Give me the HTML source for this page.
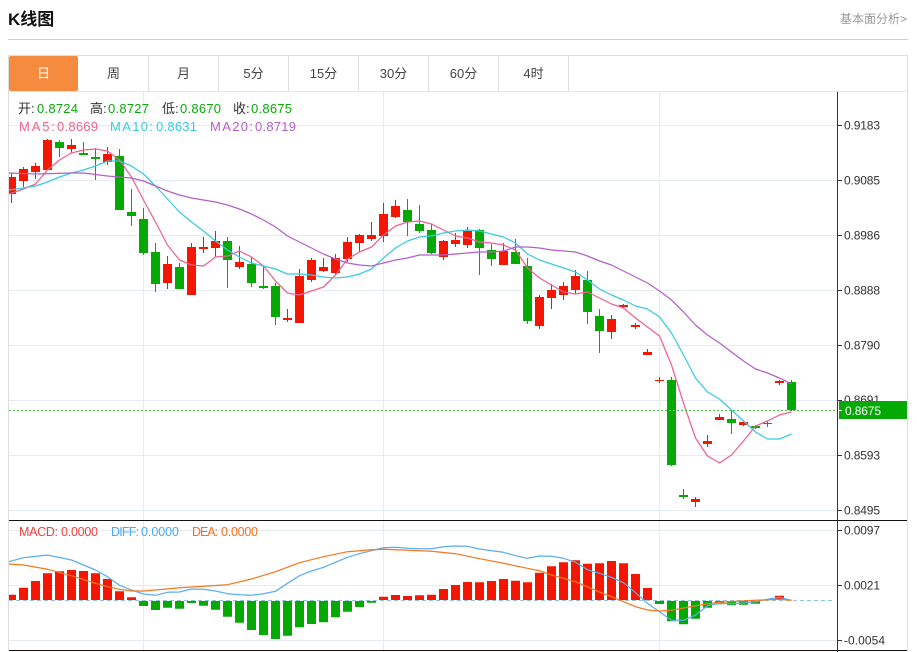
<!DOCTYPE html>
<html lang="zh">
<head>
<meta charset="utf-8">
<title>K线图</title>
<style>
html,body{margin:0;padding:0;background:#fff;width:917px;height:652px;overflow:hidden}
body{position:relative;font-family:"Liberation Sans","Noto Sans CJK SC",sans-serif}
.title{position:absolute;left:8px;top:9px;font-size:17px;line-height:22px;font-weight:bold;color:#111}
.more{position:absolute;left:840px;top:11px;width:70px;font-size:12px;line-height:16px;color:#999;white-space:nowrap}
.hr{position:absolute;left:8px;top:39px;width:900px;height:1px;background:#ccc}
.tabs{position:absolute;left:8px;top:55px;width:898px;border:1px solid #ddd;border-bottom:1px solid #e6e6e6;box-sizing:content-box;height:35px}
.tab{position:absolute;top:0;width:69px;height:35px;line-height:35px;text-align:center;font-size:13px;color:#444;border-right:1px solid #ddd}
.tab.on{background:#f58b3f;color:#fff;border-right:0;width:69px;border-radius:2px;left:0}
svg{position:absolute;left:0;top:0}
svg text{font-family:"Liberation Sans","Noto Sans CJK SC",sans-serif}
</style>
</head>
<body>
<div class="title">K线图</div>
<div class="more">基本面分析&gt;</div>
<div class="hr"></div>
<div class="tabs">
<div class="tab on">日</div>
<div class="tab" style="left:70px">周</div>
<div class="tab" style="left:140px">月</div>
<div class="tab" style="left:210px">5分</div>
<div class="tab" style="left:280px">15分</div>
<div class="tab" style="left:350px">30分</div>
<div class="tab" style="left:420px">60分</div>
<div class="tab" style="left:490px">4时</div>
</div>
<svg width="917" height="652" viewBox="0 0 917 652">
<defs><clipPath id="c"><rect x="9" y="92" width="828" height="560"/></clipPath></defs>
<path d="M8.5 91V651M907.5 91V651" stroke="#ddd" fill="none"/>
<path d="M9 125.5H837M9 180.5H837M9 235.5H837M9 290.5H837M9 345.5H837M9 400.5H837M9 455.5H837M9 510.5H837M9 530.5H837M9 585.5H837M9 640.5H837M143.5 92V650M383.5 92V650M659.5 92V650" stroke="#e4ecf2" fill="none"/>
<g clip-path="url(#c)">
<path fill="none" stroke="#f41600" d="M11.5 173V203M23.5 167V187M35.5 163V179M47.5 139V170M71.5 139V153M107.5 147V165M167.5 256V289M191.5 243V295M203.5 237V253M215.5 231V257M239.5 246V269M287.5 309V322M299.5 269V323M311.5 258V282M323.5 258V272M335.5 254V274M347.5 237V262M359.5 234V252M371.5 222V241M383.5 203V242M395.5 200V218M443.5 240V260M455.5 233V247M467.5 227V248M503.5 243V265M539.5 295V329M551.5 284V309M563.5 282V300M575.5 270V294M611.5 315V339M623.5 304V308M635.5 323V329M647.5 349V355M659.5 377V383M695.5 497V507M707.5 435V447M719.5 414V420M743.5 421V426M779.5 380V385"/>
<path fill="#f41600" d="M7 177h9v17h-9zM19 169h9v12h-9zM31 166h9v6h-9zM43 140h9v30h-9zM67 145h9v4h-9zM103 154h9v8h-9zM163 264h9v19h-9zM187 247h9v48h-9zM199 247h9v2h-9zM211 241h9v7h-9zM235 262h9v5h-9zM283 318h9v2h-9zM295 276h9v47h-9zM307 260h9v20h-9zM319 267h9v4h-9zM331 258h9v15h-9zM343 242h9v17h-9zM355 235h9v8h-9zM367 235h9v4h-9zM379 214h9v22h-9zM391 206h9v11h-9zM439 241h9v16h-9zM451 240h9v4h-9zM463 231h9v14h-9zM499 251h9v14h-9zM535 297h9v29h-9zM547 290h9v8h-9zM559 286h9v9h-9zM571 276h9v14h-9zM607 319h9v13h-9zM619 305h9v2h-9zM631 325h9v2h-9zM643 352h9v3h-9zM655 380h9v1h-9zM691 499h9v3h-9zM703 441h9v3h-9zM715 417h9v3h-9zM739 422h9v3h-9zM775 381h9v2h-9z"/>
<path fill="none" stroke="#04a904" d="M59.5 140V157M83.5 142V155M95.5 148V180M119.5 149V210M131.5 189V226M143.5 208V255M155.5 243V292M179.5 263V289M227.5 237V288M251.5 257V287M263.5 266V289M275.5 283V325M407.5 199V236M419.5 205V233M431.5 224V254M479.5 229V275M491.5 244V266M515.5 239V264M527.5 258V324M587.5 271V324M599.5 309V353M671.5 377V466M683.5 489V499M731.5 411V434M755.5 425V429M767.5 421V427M791.5 380V411"/>
<path fill="#04a904" d="M55 142h9v6h-9zM79 153h9v2h-9zM91 157h9v2h-9zM115 156h9v54h-9zM127 212h9v4h-9zM139 219h9v34h-9zM151 252h9v32h-9zM175 267h9v22h-9zM223 241h9v19h-9zM247 264h9v19h-9zM259 286h9v2h-9zM271 286h9v31h-9zM403 210h9v12h-9zM415 224h9v7h-9zM427 230h9v23h-9zM475 230h9v18h-9zM487 250h9v9h-9zM511 252h9v12h-9zM523 266h9v55h-9zM583 280h9v32h-9zM595 316h9v15h-9zM667 380h9v85h-9zM679 495h9v2h-9zM727 419h9v4h-9zM751 426h9v2h-9zM763 423h9v1h-9zM787 382h9v28h-9z"/>
<g fill="none" stroke-width="1.25" stroke-linejoin="round">
<polyline stroke="#f2608f" points="9,194 23.5,189 35.5,184 47.5,170 59.5,160 71.5,153 83.5,150 95.5,149 107.5,151 119.5,160 131.5,177 143.5,200 155.5,222 167.5,245 179.5,260 191.5,265 203.5,266 215.5,257 227.5,256 239.5,251 251.5,257 263.5,266 275.5,281 287.5,293 299.5,295 311.5,291 323.5,287 335.5,275 347.5,259 359.5,252 371.5,247 383.5,235 395.5,226 407.5,222 419.5,221 431.5,224 443.5,230 455.5,236 467.5,238 479.5,242 491.5,243 503.5,245 515.5,250 527.5,268 539.5,278 551.5,285 563.5,292 575.5,294 587.5,292 599.5,298 611.5,304 623.5,308 635.5,318 647.5,327 659.5,336 671.5,365 683.5,403 695.5,438 707.5,456 719.5,463 731.5,455 743.5,441 755.5,426 767.5,421 779.5,415 791.5,412"/>
<polyline stroke="#38cbe0" points="9,190 23.5,188 35.5,186 47.5,182 59.5,177 71.5,173 83.5,170 95.5,166 107.5,161 119.5,161 131.5,166 143.5,174 155.5,186 167.5,199 179.5,212 191.5,222 203.5,231 215.5,241 227.5,250 239.5,257 251.5,263 263.5,266 275.5,269 287.5,274 299.5,274 311.5,275 323.5,277 335.5,278 347.5,277 359.5,274 371.5,269 383.5,258 395.5,248 407.5,241 419.5,237 431.5,236 443.5,233 455.5,231 467.5,230 479.5,231 491.5,234 503.5,237 515.5,243 527.5,254 539.5,260 551.5,264 563.5,268 575.5,272 587.5,280 599.5,289 611.5,295 623.5,300 635.5,306 647.5,309 659.5,317 671.5,333 683.5,355 695.5,378 707.5,392 719.5,399 731.5,410 743.5,421 755.5,432 767.5,439 779.5,439 791.5,434"/>
<polyline stroke="#b55fc8" points="9,173 35.5,174 71.5,173 83.5,173 107.5,176 131.5,178 143.5,181 155.5,186 167.5,191 179.5,195 191.5,198 203.5,200 215.5,202 227.5,205 239.5,209 251.5,214 263.5,220 275.5,227 287.5,236 299.5,242 311.5,248 323.5,254 335.5,259 347.5,263 359.5,265 371.5,266 383.5,263 395.5,260 407.5,258 419.5,255 431.5,255 443.5,255 455.5,254 467.5,253 479.5,252 491.5,252 503.5,251 515.5,247 527.5,247 539.5,248 551.5,250 563.5,251 575.5,252 587.5,256 599.5,261 611.5,265 623.5,271 635.5,277 647.5,283 659.5,291 671.5,300 683.5,312 695.5,325 707.5,335 719.5,343 731.5,352 743.5,361 755.5,369 767.5,373 779.5,378 791.5,384"/>
</g>
<path d="M9 410.5H837" stroke="#4fca4f" stroke-width="1.3" stroke-dasharray="2 2" fill="none"/>
<path d="M9 600.5H834" stroke="#8fc4dc" stroke-dasharray="4 3" fill="none"/>
<path fill="#f41600" d="M7 594.7h9V600h-9zM19 587.7h9V600h-9zM31 581h9V600h-9zM43 573.3h9V600h-9zM55 571.3h9V600h-9zM67 570h9V600h-9zM79 571h9V600h-9zM91 573.3h9V600h-9zM103 579h9V600h-9zM115 591.3h9V600h-9zM127 597.3h9V600h-9zM379 596.7h9V600h-9zM391 595h9V600h-9zM403 596h9V600h-9zM415 595.3h9V600h-9zM427 594.7h9V600h-9zM439 589h9V600h-9zM451 585h9V600h-9zM463 582h9V600h-9zM475 582.3h9V600h-9zM487 581h9V600h-9zM499 579h9V600h-9zM511 580.7h9V600h-9zM523 582.3h9V600h-9zM535 572.7h9V600h-9zM547 566.3h9V600h-9zM559 562.3h9V600h-9zM571 560.3h9V600h-9zM583 563.7h9V600h-9zM595 563.3h9V600h-9zM607 561h9V600h-9zM619 563.3h9V600h-9zM631 574h9V600h-9zM643 588h9V600h-9zM775 595.7h9V600h-9z"/>
<path fill="#04a904" d="M139 601h9v5h-9zM151 601h9v9h-9zM163 601h9v6.7h-9zM175 601h9v7.7h-9zM187 601h9v2h-9zM199 601h9v4.7h-9zM211 601h9v8.7h-9zM223 601h9v15.7h-9zM235 601h9v21.7h-9zM247 601h9v29h-9zM259 601h9v34h-9zM271 601h9v38h-9zM283 601h9v34.7h-9zM295 601h9v26.3h-9zM307 601h9v23h-9zM319 601h9v21.3h-9zM331 601h9v16.3h-9zM343 601h9v10.7h-9zM355 601h9v6h-9zM367 601h9v1.7h-9zM655 601h9v3h-9zM667 601h9v20.3h-9zM679 601h9v23.3h-9zM691 601h9v17.7h-9zM703 601h9v6.7h-9zM715 601h9v3.3h-9zM727 601h9v4.3h-9zM739 601h9v3.7h-9zM751 601h9v2.7h-9z"/>
<g fill="none" stroke-width="1.25" stroke-linejoin="round">
<polyline stroke="#5aaef0" points="9,561.7 23.5,557.7 47.5,555 71.5,560 95.5,570 107.5,576.7 119.5,585.3 131.5,590 143.5,594 155.5,595.3 167.5,592.3 179.5,592 191.5,589 203.5,589.3 215.5,591 227.5,593.7 239.5,594.7 251.5,595.3 263.5,593.7 275.5,591.3 287.5,583.3 299.5,575.7 311.5,571 323.5,567.3 335.5,562.3 347.5,557.3 359.5,553.7 371.5,550.7 383.5,547.7 395.5,547.3 407.5,548.3 419.5,548.7 431.5,548.7 443.5,546.7 455.5,546 467.5,546.3 479.5,549 491.5,550.7 503.5,552.3 515.5,555.7 527.5,558.3 539.5,556 551.5,556.3 563.5,558.3 575.5,562.3 587.5,569.7 599.5,573.3 611.5,577.3 623.5,582.7 635.5,592.7 647.5,603.3 659.5,611.7 671.5,620.3 683.5,620.3 695.5,615 707.5,605.7 719.5,603.3 731.5,603.7 743.5,603 755.5,601.7 767.5,599.3 779.5,597.3 791.5,600.3"/>
<polyline stroke="#f5781e" points="9,564 23.5,565 47.5,569.3 71.5,575.7 95.5,583.3 107.5,586.7 119.5,589.3 131.5,591 143.5,591 155.5,590 179.5,587.7 203.5,586.3 227.5,584.7 251.5,579 275.5,571.7 299.5,562.7 323.5,556.7 347.5,551.7 371.5,549.7 383.5,549.3 407.5,550.3 431.5,551.3 455.5,553.7 479.5,558.7 503.5,563.3 527.5,568.3 539.5,570.7 551.5,575 575.5,581.7 599.5,592 611.5,596.7 623.5,601.7 635.5,606.7 647.5,610 659.5,611 671.5,610.3 683.5,608 695.5,605.7 707.5,603.7 719.5,602.3 755.5,600.3 779.5,599.3 791.5,600.3"/>
</g>
</g>
<path d="M9 520.5H907M9 650.5H907" stroke="#111" fill="none"/>
<path d="M837.5 92V652" stroke="#333" fill="none"/>
<path d="M838 125.5h4M838 180.5h4M838 235.5h4M838 290.5h4M838 345.5h4M838 400.5h4M838 455.5h4M838 510.5h4M838 530.5h4M838 585.5h4M838 640.5h4" stroke="#333" fill="none"/>
<g font-size="12" fill="#333">
<text x="844" y="129.5" textLength="36">0.9183</text>
<text x="844" y="184.5" textLength="36">0.9085</text>
<text x="844" y="239.5" textLength="36">0.8986</text>
<text x="844" y="294.5" textLength="36">0.8888</text>
<text x="844" y="349.5" textLength="36">0.8790</text>
<text x="844" y="404" textLength="36">0.8691</text>
<text x="844" y="459.5" textLength="36">0.8593</text>
<text x="844" y="514.5" textLength="36">0.8495</text>
<text x="844" y="534.5" textLength="36">0.0097</text>
<text x="844" y="589.5" textLength="36">0.0021</text>
<text x="844" y="644.5" textLength="41">-0.0054</text>
</g>
<rect x="839" y="401" width="68" height="18" fill="#04a904"/>
<path d="M838 410.5h4" stroke="#fff" fill="none"/>
<text x="845" y="415" font-size="12" fill="#fff" textLength="36">0.8675</text>
<g font-size="13">
<text x="18" y="113" fill="#333">开:</text><text x="37" y="113" fill="#0aa80a" textLength="41">0.8724</text>
<text x="90" y="113" fill="#333">高:</text><text x="108" y="113" fill="#0aa80a" textLength="41">0.8727</text>
<text x="162" y="113" fill="#333">低:</text><text x="180" y="113" fill="#0aa80a" textLength="41">0.8670</text>
<text x="233" y="113" fill="#333">收:</text><text x="251" y="113" fill="#0aa80a" textLength="41">0.8675</text>
<text x="19" y="131" fill="#f2608f" textLength="36">MA5:</text><text x="57" y="131" fill="#f2608f" textLength="41">0.8669</text>
<text x="110" y="131" fill="#38cbe0" textLength="43">MA10:</text><text x="156" y="131" fill="#38cbe0" textLength="41">0.8631</text>
<text x="210" y="131" fill="#b55fc8" textLength="43">MA20:</text><text x="255" y="131" fill="#b55fc8" textLength="41">0.8719</text>
</g>
<g font-size="12.5">
<text x="19" y="536" fill="#f0403a" textLength="39">MACD:</text><text x="61" y="536" fill="#f0403a" textLength="37">0.0000</text>
<text x="111" y="536" fill="#4aa8f0" textLength="28">DIFF:</text><text x="141" y="536" fill="#4aa8f0" textLength="38">0.0000</text>
<text x="192" y="536" fill="#f5701e" textLength="26">DEA:</text><text x="221" y="536" fill="#f5701e" textLength="37">0.0000</text>
</g>
</svg>
</body>
</html>
